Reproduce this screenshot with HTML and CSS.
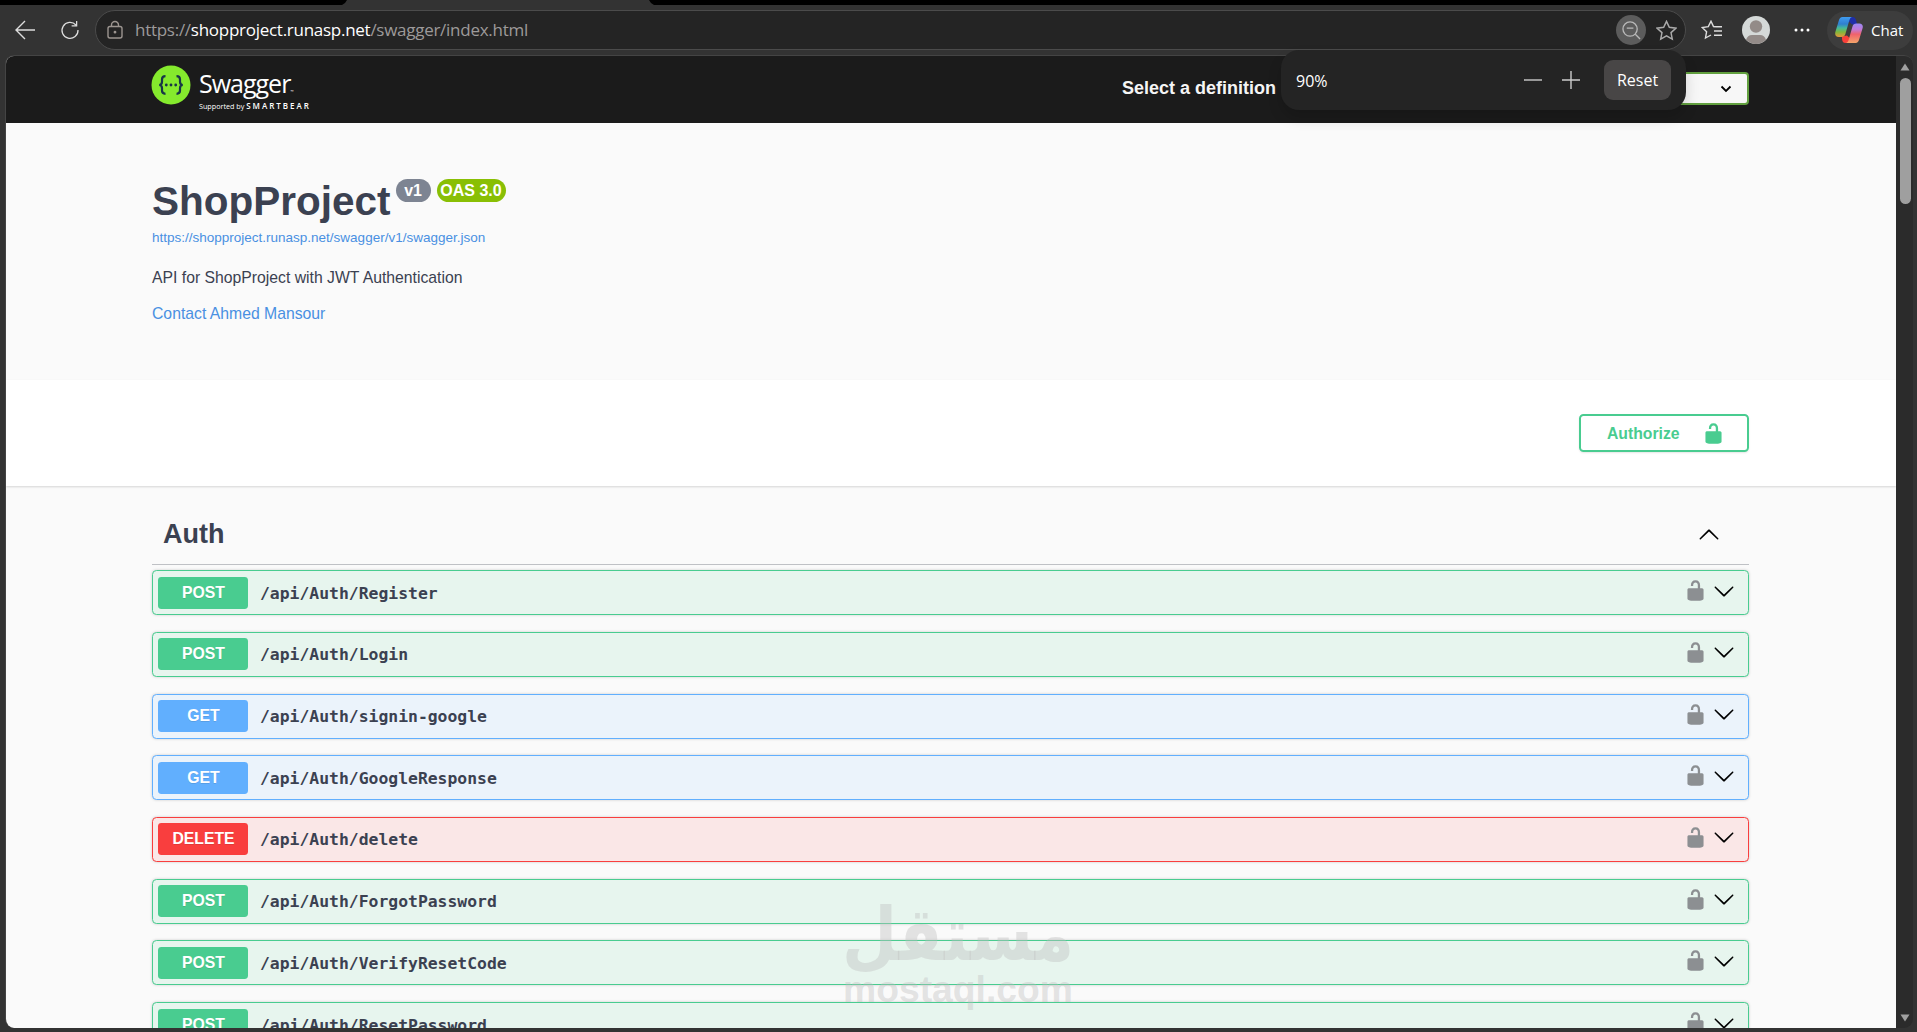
FILE: index.html
```
<!DOCTYPE html>
<html lang="en">
<head>
  <meta charset="utf-8">
  <title>Swagger UI</title>
  <link rel="stylesheet" href="styles.css">
</head>
<body>
  <svg class="defs" width="0" height="0">
    <symbol id="unlocked" viewBox="0 0 20 20">
      <path d="M15.8 8H14V5.6C14 2.703 12.665 1 10 1 7.334 1 6 2.703 6 5.6V6h2v-.801C8 3.754 8.797 3 10 3c1.203 0 2 .754 2 2.199V8H4c-.553 0-1 .646-1 1.199V17c0 .549.428 1.139.951 1.307l1.197.387C5.672 18.861 6.55 19 7.1 19h5.8c.549 0 1.428-.139 1.951-.307l1.196-.387c.524-.167.953-.757.953-1.306V9.199C17 8.646 16.352 8 15.8 8z"/>
    </symbol>
    <symbol id="arrow-down" viewBox="0 0 20 20">
      <path d="M17.418 6.109c.272-.268.709-.268.979 0s.271.701 0 .969l-7.908 7.83c-.27.268-.707.268-.979 0l-7.908-7.83c-.27-.268-.27-.701 0-.969.271-.268.709-.268.979 0L10 13.25l7.418-7.141z"/>
    </symbol>
    <symbol id="star" viewBox="0 0 20 20">
      <path d="M10 1.300l2.700 5.700 6.200.8-4.600 4.200 1.200 6.200L10 15.200l-5.500 3L5.700 12 1.100 7.800l6.200-.8z"/>
    </symbol>
  </svg>

  <div class="tabstrip"><div class="tab"></div></div>
  <div class="toolbar">
    <svg class="nav-icon back" viewBox="0 0 22 22"><path d="M21 11H2M11 2l-9 9 9 9"/></svg>
    <svg class="nav-icon reload" viewBox="0 0 22 22"><path d="M17.500 5.500A8.800 8.800 0 1 0 19.800 11M18.300 1V6.500H12.800"/></svg>
    <div class="address">
      <svg class="site-lock" viewBox="0 0 18 20"><rect x="2" y="6.500" width="14" height="11.500" rx="2"/><path d="M5.500 6.500V5a3.500 3.500 0 0 1 7 0v1.500"/><circle cx="9" cy="12.200" r=".7"/></svg>
      <span class="url">https://<b>shopproject.runasp.net</b>/swagger/index.html</span>
      <span class="zoom-btn"><svg viewBox="0 0 20 20"><circle cx="8.500" cy="8.500" r="7.500"/><path d="M14 14l5 5M5 7.500h7"/></svg></span>
      <svg class="fav"><use href="#star"/></svg>
    </div>
    <svg class="fav-list" viewBox="0 0 22 20"><path d="M14.200 6.800L12.500 6.500 10 1.200 7.300 6.600 1.200 7.500l4.400 4.200L4.500 18l5.500-3M14.200 6.800H21M13 11H21M13 15.200H21"/></svg>
    <svg class="avatar" viewBox="0 0 28 28"><circle cx="14" cy="14" r="14" fill="#d5d9d8"/><circle cx="14" cy="10.500" r="6.200" fill="#938b88"/><path d="M4 23.800C5 20.500 7 19 10 19h8c3 0 5 1.500 6 4.800A14 14 0 0 1 4 23.800z" fill="#938b88"/></svg>
    <svg class="dots" viewBox="0 0 16 4"><circle cx="2" cy="2" r="1.500"/><circle cx="8" cy="2" r="1.500"/><circle cx="14" cy="2" r="1.500"/></svg>
    <div class="chat">
      <svg class="copilot" viewBox="0 0 28 26">
        <defs>
          <linearGradient id="cp1" x1="0" y1="0" x2="0" y2="1"><stop offset="0" stop-color="#3f9cf0"/><stop offset=".35" stop-color="#2f7fd0"/><stop offset=".55" stop-color="#45b89a"/><stop offset=".75" stop-color="#7fb83a"/><stop offset="1" stop-color="#e8963c"/></linearGradient>
          <linearGradient id="cp2" x1="0" y1="0" x2="0" y2="1"><stop offset="0" stop-color="#9a8af5"/><stop offset=".3" stop-color="#c07ad8"/><stop offset=".55" stop-color="#f0626c"/><stop offset="1" stop-color="#f5a56a"/></linearGradient>
        </defs>
        <path d="M13 0h4.500c2 0 3 1 3.500 3l1.200 4.500H17l-4-4z" fill="#1f2fa8"/>
        <path d="M7 19.500l5-1 3 3-1 4.500h-3.500C8 26 7.500 24.500 7 22z" fill="#f9403a"/>
        <path d="M7.500 0H17c-1.600.5-2.200 1.700-2.800 3.800l-3.600 12.400C10 18.700 8.800 20 6.500 20H3.800C.5 20-.4 17.500.5 14.500L3.700 4C4.400 1.500 5.500 0 7.500 0z" fill="url(#cp1)"/>
        <path d="M20.500 26H11c1.600-.5 2.200-1.700 2.800-3.800l3.600-12.400C18 7.300 19.200 6.500 21.500 6.500h2.700c3.300 0 4.200 2.500 3.300 5L24.300 22c-.7 2.500-1.800 4-3.800 4z" fill="url(#cp2)"/>
      </svg>
      <span>Chat</span>
    </div>
  </div>

  <div class="viewport">
    <div class="page">
      <div class="topbar">
        <div class="wrapper topbar-wrapper">
          <svg class="logo-mark" viewBox="0 0 40 40">
            <circle cx="20" cy="20" r="19.500" fill="#85ea2d"/>
            <path d="M14.500 11.200c-2.600 0-3.500.8-3.500 3.200v2.400c0 2-.8 3-2.700 3.200 1.900.2 2.700 1.200 2.700 3.200v2.400c0 2.400.9 3.200 3.500 3.200M25.500 11.200c2.600 0 3.500.8 3.500 3.200v2.400c0 2 .8 3 2.700 3.200-1.900.2-2.700 1.200-2.700 3.200v2.400c0 2.400-.9 3.200-3.500 3.200" fill="none" stroke="#173647" stroke-width="2.200"/>
            <g fill="#173647"><circle cx="15.300" cy="20" r="1.400"/><circle cx="20" cy="20" r="1.400"/><circle cx="24.700" cy="20" r="1.400"/></g>
          </svg>
          <div class="logo-text">
            <div class="logo-name">Swagger<small>™</small></div>
            <div class="logo-sub">Supported by <b>SMARTBEAR</b></div>
          </div>
          <div class="definition">
            <span>Select a definition</span>
            <div class="select"><svg viewBox="0 0 12 8"><path d="M1.500 1.500L6 6l4.500-4.500"/></svg></div>
          </div>
        </div>
      </div>

      <div class="info wrapper">
        <h2 class="title">ShopProject<span class="badges"><span class="badge version">v1</span><span class="badge oas">OAS 3.0</span></span></h2>
        <a class="spec-link">https://shopproject.runasp.net/swagger/v1/swagger.json</a>
        <p class="description">API for ShopProject with JWT Authentication</p>
        <a class="contact">Contact Ahmed Mansour</a>
      </div>

      <div class="scheme-container">
        <div class="wrapper schemes">
          <button class="authorize"><span>Authorize</span><svg><use href="#unlocked"/></svg></button>
        </div>
      </div>

      <div class="wrapper">
        <h3 class="tag"><span>Auth</span><svg class="arrow up"><use href="#arrow-down"/></svg></h3>
        <div class="opblock post"><span class="method">POST</span><span class="path">/api/Auth/Register</span><svg class="lock"><use href="#unlocked"/></svg><svg class="arrow"><use href="#arrow-down"/></svg></div>
        <div class="opblock post"><span class="method">POST</span><span class="path">/api/Auth/Login</span><svg class="lock"><use href="#unlocked"/></svg><svg class="arrow"><use href="#arrow-down"/></svg></div>
        <div class="opblock get"><span class="method">GET</span><span class="path">/api/Auth/signin-google</span><svg class="lock"><use href="#unlocked"/></svg><svg class="arrow"><use href="#arrow-down"/></svg></div>
        <div class="opblock get"><span class="method">GET</span><span class="path">/api/Auth/GoogleResponse</span><svg class="lock"><use href="#unlocked"/></svg><svg class="arrow"><use href="#arrow-down"/></svg></div>
        <div class="opblock delete"><span class="method">DELETE</span><span class="path">/api/Auth/delete</span><svg class="lock"><use href="#unlocked"/></svg><svg class="arrow"><use href="#arrow-down"/></svg></div>
        <div class="opblock post"><span class="method">POST</span><span class="path">/api/Auth/ForgotPassword</span><svg class="lock"><use href="#unlocked"/></svg><svg class="arrow"><use href="#arrow-down"/></svg></div>
        <div class="opblock post"><span class="method">POST</span><span class="path">/api/Auth/VerifyResetCode</span><svg class="lock"><use href="#unlocked"/></svg><svg class="arrow"><use href="#arrow-down"/></svg></div>
        <div class="opblock post"><span class="method">POST</span><span class="path">/api/Auth/ResetPassword</span><svg class="lock"><use href="#unlocked"/></svg><svg class="arrow"><use href="#arrow-down"/></svg></div>
      </div>
    </div>
    <div class="scrollbar">
      <svg viewBox="0 0 10 8"><path d="M5 0.500L9.500 7.500H.5z"/></svg>
      <div class="thumb"></div>
      <svg class="down" viewBox="0 0 10 8"><path d="M5 7.500L9.500.5H.5z"/></svg>
    </div>
  </div>

  <div class="zoom-popup">
    <span class="percent">90%</span>
    <svg viewBox="0 0 18 18"><path d="M0 9h18"/></svg>
    <svg viewBox="0 0 18 18"><path d="M0 9h18M9 0v18"/></svg>
    <span class="reset">Reset</span>
  </div>

  <svg class="watermark" viewBox="0 0 240 120">
    <text class="wm-ar" x="120" y="64" text-anchor="middle" textLength="232" lengthAdjust="spacingAndGlyphs">مستقل</text>
    <text class="wm-en" x="5" y="106" textLength="230" lengthAdjust="spacingAndGlyphs">mostaql.com</text>
  </svg>
</body>
</html>
```
FILE: styles.css
```
* {
  box-sizing: border-box;
}

body {
  margin: 0;
  height: 1032px;
  overflow: hidden;
  display: flex;
  flex-direction: column;
  background-color: #333;
  font-family: "Liberation Sans", Arial, sans-serif;
  color: #3b4151;
}

.defs {
  position: absolute;
}

/* browser chrome */
.tabstrip {
  height: 5px;
  flex: none;
  background: #000;
}

.tab {
  width: 312px;
  height: 5px;
  margin-left: 342px;
  background: #333;
  clip-path: polygon(5px 0, 307px 0, 309px 3px, 312px 5px, 0 5px, 3px 3px);
}

.toolbar {
  height: 50px;
  flex: none;
  display: flex;
  align-items: center;
  padding-left: 14px;
  color: #fff;
  font-family: "Open Sans", "Segoe UI", sans-serif;
}

.toolbar svg {
  fill: none;
  stroke: #ddd;
  stroke-width: 1.4;
  flex: none;
}

.nav-icon {
  width: 22px;
  height: 22px;
}

.reload {
  width: 20px;
  height: 20px;
  margin-left: 24px;
}

.address {
  width: 1591px;
  height: 40px;
  margin-left: 15px;
  flex: none;
  display: flex;
  align-items: center;
  border: 1px solid #4b4b4b;
  border-radius: 20px;
  background: #242424;
  padding: 0 8px 0 10px;
}

.toolbar .site-lock {
  width: 18px;
  height: 20px;
  stroke: #9c9590;
}

.url {
  flex: 1;
  margin-left: 11px;
  padding-bottom: 2px;
  font-size: 17px;
  letter-spacing: -0.270px;
  color: #9d9a9a;
}

.url b {
  font-weight: 400;
  color: #fff;
}

.zoom-btn {
  width: 30px;
  height: 30px;
  border-radius: 50%;
  background: #5c5c5c;
  display: flex;
  align-items: center;
  justify-content: center;
}

.zoom-btn svg {
  width: 19px;
  height: 19px;
  stroke: #b9b9b9;
}

.toolbar .fav {
  width: 21px;
  height: 21px;
  margin-left: 10px;
  stroke: #aaa;
}

.fav-list {
  width: 22px;
  height: 20px;
  margin-left: 15px;
}

.toolbar .avatar {
  width: 28px;
  height: 28px;
  margin-left: 19px;
  stroke: none;
}

.toolbar .dots {
  width: 16px;
  height: 4px;
  margin-left: 24px;
  fill: #fff;
  stroke: none;
}

.chat {
  height: 39px;
  width: 86px;
  margin-left: 17px;
  flex: none;
  display: flex;
  align-items: center;
  border-radius: 20px;
  background: #3d3d3d;
  padding: 0 0 1px 8px;
  font-size: 15px;
}

.toolbar .copilot {
  width: 28px;
  height: 26px;
  stroke: none;
  margin-right: 8px;
}

/* page area */
.viewport {
  height: 973px;
  flex: none;
  margin: 0 4px 0 5px;
  display: flex;
  overflow: hidden;
  border-radius: 9px;
  border-top: 1px solid #444;
  border-left: 1px solid #444;
  background: #2b2b2b;
}

.page {
  width: 1890px;
  flex: none;
  overflow: hidden;
  background: #fafafa;
}

.scrollbar {
  width: 18px;
  flex: none;
  display: flex;
  flex-direction: column;
  align-items: center;
  padding: 7px 0 6px;
}

.scrollbar svg {
  width: 10px;
  height: 8px;
  fill: #a0a0a0;
}

.thumb {
  width: 11px;
  height: 126px;
  margin-top: 7px;
  border-radius: 6px;
  background: #9f9f9f;
}

.down {
  margin-top: auto;
}

.wrapper {
  width: 1597px;
  margin-left: 146px;
}

.topbar {
  height: 67px;
  background: #1b1b1b;
}

.topbar-wrapper {
  height: 67px;
  display: flex;
}

.logo-mark {
  width: 40px;
  height: 40px;
  margin: 9px 0 0 -1px;
}

.logo-text {
  margin-left: 8px;
  padding-top: 9px;
  color: #fff;
  font-family: "Open Sans", sans-serif;
}

.logo-name {
  height: 37px;
  font-size: 25px;
  line-height: 36px;
  letter-spacing: -1px;
}

.logo-name small {
  font-size: 4px;
}

.logo-sub {
  font-size: 7.200px;
  line-height: 8px;
  white-space: nowrap;
}

.logo-sub b {
  font-size: 8px;
  font-weight: 600;
  letter-spacing: 2px;
}

.definition {
  margin-left: auto;
  display: flex;
  align-items: center;
  font-size: 18px;
  font-weight: bold;
  color: #f5f5f5;
  padding-bottom: 3px;
}

.select {
  width: 455px;
  height: 33px;
  margin: 1px 0 0 18px;
  border: 2px solid #62a03f;
  border-radius: 4px;
  background: #f7f7f7;
  display: flex;
  align-items: center;
  justify-content: flex-end;
  padding-right: 15px;
}

.select svg {
  width: 12px;
  height: 8px;
  fill: none;
  stroke: #000;
  stroke-width: 1.8;
}

/* api info */
.info {
  height: 257px;
  padding-top: 55px;
}

.title {
  margin: 0;
  font-size: 40.500px;
  line-height: 47px;
  display: flex;
}

.badges {
  display: flex;
  margin: 1px 0 0 5px;
}

.badge {
  height: 23px;
  border-radius: 12px;
  color: #fff;
  font-size: 16px;
  line-height: 23px;
  text-align: center;
}

.version {
  width: 35px;
  background: #7d8492;
}

.oas {
  width: 69px;
  margin-left: 6px;
  background: #89bf04;
}

.info a {
  display: block;
  color: #4990e2;
}

.spec-link {
  margin-top: 4px;
  font-size: 13.500px;
  line-height: 18px;
}

.description {
  margin: 21px 0 0;
  font-size: 15.750px;
  line-height: 19px;
}

.contact {
  margin-top: 17px;
  font-size: 15.750px;
  line-height: 19px;
}

.scheme-container {
  height: 106px;
  background: #fff;
  box-shadow: 0 1px 2px rgba(0, 0, 0, .15);
}

.schemes {
  display: flex;
  justify-content: flex-end;
  padding-top: 34px;
}

.authorize {
  width: 170px;
  height: 38px;
  display: flex;
  align-items: center;
  border: 2px solid #49cc90;
  border-radius: 4.500px;
  background: transparent;
  box-shadow: 0 1px 2px rgba(0, 0, 0, .1);
  padding: 1px 0 0 26px;
  font: bold 15.750px "Liberation Sans", Arial, sans-serif;
  color: #49cc90;
}

.authorize svg {
  width: 23px;
  height: 23px;
  margin: -1px 0 0 22px;
  fill: #49cc90;
}

/* operations */
.tag {
  height: 79px;
  margin: 0 0 5.200px;
  padding: 19px 29px 0 11px;
  display: flex;
  align-items: center;
  justify-content: space-between;
  border-bottom: 1px solid #bfc1c5;
  font-size: 27px;
}

.arrow {
  width: 22px;
  height: 22px;
}

.up {
  transform: rotate(180deg);
}

.opblock {
  height: 45px;
  margin-bottom: 16.700px;
  display: flex;
  align-items: center;
  border: 1px solid;
  border-radius: 4.500px;
  box-shadow: 0 0 3px rgba(0, 0, 0, .19);
  padding: 0 13px 0 5px;
}

.method {
  width: 90px;
  height: 32px;
  border-radius: 3.400px;
  padding-left: 1px;
  color: #fff;
  font-size: 15.750px;
  font-weight: bold;
  line-height: 32px;
  text-align: center;
  text-shadow: 0 1px 0 rgba(0, 0, 0, .1);
}

.path {
  flex: 1;
  margin-left: 12px;
  padding-top: 1px;
  font: bold 16.400px "DejaVu Sans Mono", Consolas, monospace;
}

.lock {
  width: 23px;
  height: 23px;
  margin: -4px 6px 0 0;
  fill: #8c8f92;
}

.opblock .arrow {
  margin-top: -4px;
}

.post {
  border-color: #49cc90;
  background: #e7f5ee;
}

.post .method {
  background: #49cc90;
}

.get {
  border-color: #61affe;
  background: #ebf3fb;
}

.get .method {
  background: #61affe;
}

.delete {
  border-color: #f93e3e;
  background: #fae7e7;
}

.delete .method {
  background: #f93e3e;
}

/* zoom flyout under the address bar */
.zoom-popup {
  position: absolute;
  left: 1281px;
  top: 50px;
  width: 405px;
  height: 60px;
  display: flex;
  align-items: center;
  border-radius: 18px;
  background: #242424;
  box-shadow: 0 8px 14px rgba(0, 0, 0, .15);
  padding: 0 15px;
  color: #fff;
  font-family: "Open Sans", "Segoe UI", sans-serif;
  font-size: 16px;
}

.percent {
  flex: 1;
  padding-top: 2px;
}

.zoom-popup svg {
  width: 18px;
  height: 18px;
  margin-right: 20px;
  stroke: #ccc;
  stroke-width: 1.4;
}

.reset {
  width: 67px;
  height: 40px;
  margin-left: 4px;
  border-radius: 9px;
  background: #484646;
  line-height: 40px;
  text-align: center;
}

.watermark {
  position: absolute;
  left: 838px;
  top: 896px;
  width: 240px;
  height: 120px;
  fill: rgba(190, 190, 190, .4);
  font-weight: bold;
}

.wm-ar {
  font-family: "DejaVu Sans", sans-serif;
  font-size: 74px;
}

.wm-en {
  font-family: "Liberation Sans", Arial, sans-serif;
  font-size: 36px;
}
```
